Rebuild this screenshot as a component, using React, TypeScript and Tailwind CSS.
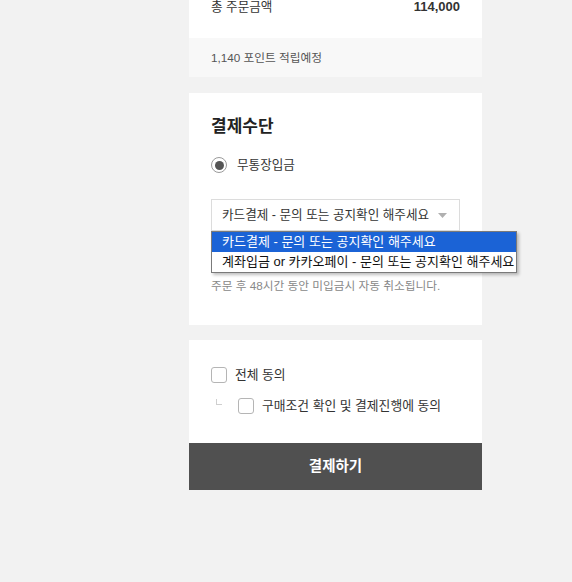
import { useState } from 'react'

const options = [
  '카드결제 - 문의 또는 공지확인 해주세요',
  '계좌입금 or 카카오페이 - 문의 또는 공지확인 해주세요',
]

function Checkbox() {
  return <span className="block w-4 h-4 shrink-0 rounded-[3px] border border-[#b5b5b5] bg-white" />
}

export default function App() {
  const [selected] = useState(0)

  return (
    <div className="min-h-[582px] bg-[#f2f2f2] font-['Liberation_Sans','Noto_Sans_CJK_KR',sans-serif] text-[#333]">
      <div className="ml-[189px] w-[293px]">
        {/* 주문금액 */}
        <div className="h-[38px] bg-white px-[22px]">
          <div className="flex justify-between items-center h-[14px] leading-[14px]">
            <span className="text-[12.6px] text-[#333]">총 주문금액</span>
            <span className="text-[13px] font-bold text-[#333]">114,000</span>
          </div>
        </div>
        <div className="h-[39px] bg-[#f8f8f8] px-[22px] flex items-center text-[11.7px] text-[#555]">
          1,140 포인트 적립예정
        </div>

        {/* 결제수단 */}
        <div className="mt-4 bg-white px-[22px] pt-[22px] pb-[31px]">
          <h2 className="text-[17px] leading-6 font-bold text-[#222]">결제수단</h2>
          <label className="mt-[18px] flex items-center gap-[10px] h-4">
            <span className="w-4 h-4 rounded-full border border-[#9a9a9a] flex items-center justify-center">
              <span className="w-[9px] h-[9px] rounded-full bg-[#555]" />
            </span>
            <span className="text-[12.6px] text-[#333]">무통장입금</span>
          </label>

          <div className="relative mt-[26px]">
            <div className="h-8 border border-[#dcdcdc] flex items-center justify-between pl-[10px] pr-[12px] text-[12.6px] text-[#333]">
              <span>{options[selected]}</span>
              <svg width="9" height="5" viewBox="0 0 9 5">
                <path d="M0 0h9L4.5 5z" fill="#b0b0b0" />
              </svg>
            </div>
            <ul className="absolute left-0 top-8 w-[306px] z-10 border border-[#7a7a7a] bg-white shadow-[2px_2px_3px_rgba(0,0,0,0.25)] text-[13px]">
              {options.map((o, i) => (
                <li
                  key={o}
                  className={
                    i === selected
                      ? 'h-5 leading-5 pl-[10px] bg-[#1b63d6] text-white whitespace-nowrap'
                      : 'h-5 leading-5 pl-[10px] text-[#111] whitespace-nowrap'
                  }
                >
                  {o}
                </li>
              ))}
            </ul>
          </div>

          <p className="mt-[47px] text-[11.7px] leading-4 text-[#888]">
            주문 후 48시간 동안 미입금시 자동 취소됩니다.
          </p>
        </div>

        {/* 동의 */}
        <div className="mt-[15px] bg-white px-[22px] pt-[27px] pb-[29px]">
          <label className="flex items-center gap-[8px] h-4">
            <Checkbox />
            <span className="text-[12.8px] text-[#333]">전체 동의</span>
          </label>
          <label className="mt-[15px] flex items-center h-4">
            <span className="ml-[5px] mb-[8px] w-[6px] h-[6px] border-l border-b border-[#cfcfcf]" />
            <span className="ml-[16px]">
              <Checkbox />
            </span>
            <span className="ml-[8px] text-[12.8px] text-[#333]">구매조건 확인 및 결제진행에 동의</span>
          </label>
        </div>
        <button className="w-full h-[47px] bg-[#505050] text-white text-[14.5px] font-bold">
          결제하기
        </button>
      </div>
    </div>
  )
}
